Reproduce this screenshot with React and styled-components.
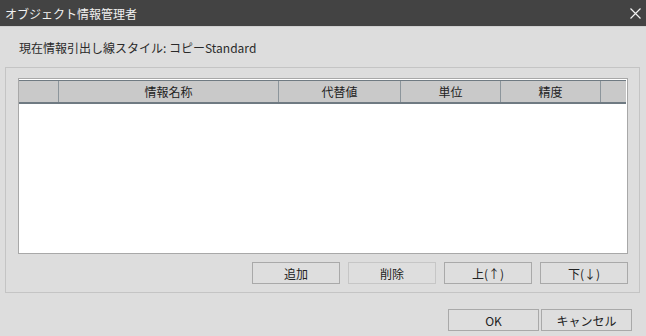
import React from "react";
import styled, { createGlobalStyle } from "styled-components";

const GlobalStyle = createGlobalStyle`
    html, body {
        margin: 0;
        padding: 0;
        background: #dddddd;
    }
    body {
        font-family: "Noto Sans CJK JP", "Liberation Sans", sans-serif;
        font-size: 12px;
        color: #222222;
    }
`;

const Dialog = styled.div`
    width: 646px;
    height: 336px;
    display: flex;
    flex-direction: column;
    background: #dddddd;
    overflow: hidden;
`;

const TitleBar = styled.div`
    height: 26px;
    flex: none;
    display: flex;
    align-items: center;
    justify-content: space-between;
    padding: 0 5px 0 5px;
    background: #434343;
    color: #f0f0f0;
    border-bottom: 1px solid #cfcfcf;
    font-size: 12px;
`;

const CloseIcon = styled.svg`
    width: 11px;
    height: 11px;
    margin-right: 0px;
`;

const StyleLabel = styled.div`
    height: 40px;
    display: flex;
    align-items: center;
    padding-left: 19px;
    font-size: 12px;
    color: #2a2a2a;
`;

const GroupBox = styled.div`
    margin-left: 5px;
    width: 635px;
    height: 226px;
    box-sizing: border-box;
    border: 1px solid #c4c4c4;
    padding: 10px 11px 8px 12px;
    display: flex;
    flex-direction: column;
    gap: 8px;
`;

const Table = styled.div`
    height: 176px;
    box-sizing: border-box;
    border: 1px solid #a8a8a8;
    background: #ffffff;
    padding: 1px 1px 0 0;
`;

const HeaderRow = styled.div`
    display: grid;
    grid-template-columns: 40px 220px 122px 100px 100px 1fr;
    height: 24px;
    box-sizing: border-box;
    background: #c9c9c9;
    border-top: 1px solid #6f7a82;
    border-bottom: 2px solid #6f7a82;
`;

const HeaderCell = styled.div`
    display: flex;
    align-items: center;
    justify-content: center;
    border-right: ${(p) => (p.$last ? "none" : "1px solid #8c959b")};
    font-size: 12px;
    color: #222222;
`;

const ButtonRow = styled.div`
    display: flex;
    justify-content: flex-end;
    gap: 8px;
`;

const Button = styled.button`
    width: ${(p) => p.$w || 88}px;
    height: 22px;
    box-sizing: border-box;
    border: 1px solid #a9a9a9;
    background: #dedede;
    font-family: inherit;
    font-size: 12px;
    color: #222222;
    padding: 0;
    display: flex;
    align-items: center;
    justify-content: center;
    ${(p) => p.$faded && "border-color: #c6c6c6;"}
`;

const Footer = styled.div`
    display: flex;
    justify-content: flex-end;
    gap: 2px;
    padding: 16px 14px 0 0;
`;

function App() {
    const columns = ["", "情報名称", "代替値", "単位", "精度", ""];

    return (
        <>
            <GlobalStyle />
            <Dialog>
                <TitleBar>
                    <span>オブジェクト情報管理者</span>
                    <CloseIcon viewBox="0 0 11 11">
                        <path d="M0.5 0.5 L10.5 10.5 M10.5 0.5 L0.5 10.5" stroke="#f2f2f2" strokeWidth="1.2" />
                    </CloseIcon>
                </TitleBar>

                <StyleLabel>現在情報引出し線スタイル: コピーStandard</StyleLabel>

                <GroupBox>
                    <Table>
                        <HeaderRow>
                            {columns.map((c, i) => (
                                <HeaderCell key={i} $last={i === columns.length - 1}>
                                    {c}
                                </HeaderCell>
                            ))}
                        </HeaderRow>
                    </Table>

                    <ButtonRow>
                        <Button>追加</Button>
                        <Button $faded>削除</Button>
                        <Button>上(↑)</Button>
                        <Button>下(↓)</Button>
                    </ButtonRow>
                </GroupBox>

                <Footer>
                    <Button $w={91}>OK</Button>
                    <Button $w={91}>キャンセル</Button>
                </Footer>
            </Dialog>
        </>
    );
}

export default App;
